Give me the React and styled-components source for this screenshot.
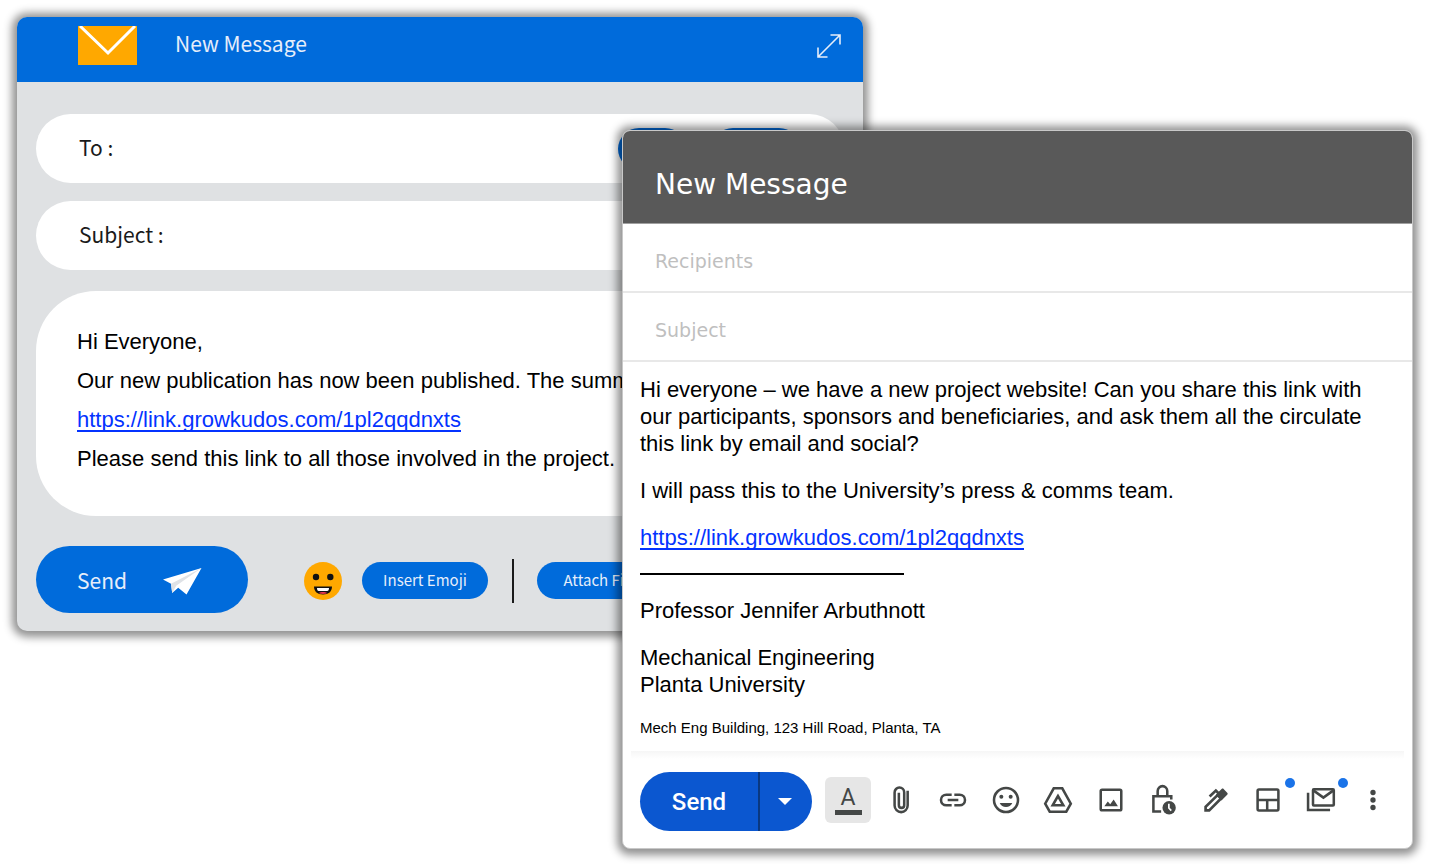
import React, { useState } from 'react';
import styled, { createGlobalStyle } from 'styled-components';

const LINK = 'https://link.growkudos.com/1pl2qqdnxts';

const tools = [
  {
    name: 'Attach files',
    draw: (
      <path d="M17 5v11.2a4.900 4.900 0 0 1-9.800 0V6.300a3.600 3.600 0 0 1 7.200 0v9.600a2 2 0 0 1-4 0V6.600" />
    ),
  },
  {
    name: 'Insert link',
    draw: (
      <path d="M11 8H7a4 4 0 0 0 0 8h4M13 8h4a4 4 0 0 1 0 8h-4M8 12h8" />
    ),
  },
  {
    name: 'Insert emoji',
    draw: (
      <>
        <circle cx="12" cy="12" r="9" />
        <circle cx="8.5" cy="9.6" r="1.5" fill="currentColor" stroke="none" />
        <circle cx="15.5" cy="9.6" r="1.5" fill="currentColor" stroke="none" />
        <path
          d="M7.3 14.2h9.4c-.8 1.9-2.6 3-4.7 3s-3.9-1.1-4.7-3z"
          fill="currentColor"
          stroke="none"
        />
      </>
    ),
  },
  {
    name: 'Insert from drive',
    draw: (
      <>
        <path d="M8.8 3.2h6.4l6.4 11.6-3.4 6H5.8l-3.4-6z" />
        <path d="M12 9l-4 7h8z" />
      </>
    ),
  },
  {
    name: 'Insert photo',
    draw: (
      <>
        <rect x="4.3" y="4.3" width="15.4" height="15.4" rx="1" />
        <path
          d="M7 16.6l2.6-3.5 1.8 2.1 2.6-3.6 3.2 5z"
          fill="currentColor"
          stroke="none"
        />
      </>
    ),
  },
  {
    name: 'Confidential mode',
    draw: (
      <>
        <path d="M10.6 20.6H4.8V9.2h13.4v2.4" />
        <path d="M8 9V5.2a3.6 3.6 0 0 1 7.2 0V9" />
        <circle cx="16.6" cy="17.8" r="5" fill="currentColor" stroke="none" />
        <path d="M16.4 14.8v3.2l1.8 1.9" stroke="#fff" strokeWidth="1.3" />
      </>
    ),
  },
  {
    name: 'Insert signature',
    draw: (
      <>
        <path d="M4.2 19.8v-2.700l9-8.800 2.600 2.600-8.900 8.900z" strokeWidth="2" />
        <path
          d="M12 7.900l4.200-4.100c.5-.5 1-.5 1.500 0l2.700 2.700c.5.5.5 1 0 1.500l-4.300 4.400z"
          fill="currentColor"
          stroke="none"
        />
        <path d="M7.200 9.400l4.700-4.500 2 2" strokeWidth="2" />
      </>
    ),
  },
  {
    name: 'Choose a layout',
    badge: true,
    draw: (
      <>
        <rect x="4.2" y="4.2" width="15.6" height="15.6" rx="1" />
        <path d="M4 12h16M11.4 12v8" />
      </>
    ),
  },
  {
    name: 'Multi-send',
    badge: true,
    draw: (
      <>
        <path d="M2.3 6.5v13h16.5" />
        <rect x="6" y="4" width="15.6" height="12.2" rx=".6" />
        <path d="M6 4.6l7.800 5.600 7.800-5.600" />
      </>
    ),
  },
  {
    name: 'More options',
    draw: (
      <g fill="currentColor" stroke="none">
        <circle cx="12" cy="6.4" r="2" />
        <circle cx="12" cy="12" r="2" />
        <circle cx="12" cy="17.6" r="2" />
      </g>
    ),
  },
];

function ToolIcon({ children }) {
  return (
    <svg
      width="32"
      height="32"
      viewBox="0 0 24 24"
      fill="none"
      stroke="currentColor"
      strokeWidth="1.9"
      aria-hidden="true"
    >
      {children}
    </svg>
  );
}

function Envelope() {
  return (
    <svg width="59" height="39" viewBox="0 0 59 39" aria-hidden="true">
      <rect width="59" height="39" fill="#ffa800" />
      <path d="M2 0l28 27L57 0" fill="none" stroke="#fff" strokeWidth="3" />
    </svg>
  );
}

function ExpandArrows() {
  return (
    <svg
      width="26"
      height="26"
      viewBox="0 0 26 26"
      fill="none"
      stroke="#e6eefa"
      strokeWidth="1.6"
      aria-hidden="true"
    >
      <path d="M2 24L24 2M14.5 2H24v9.5M2 14.5V24h9.5" />
    </svg>
  );
}

function PaperPlane() {
  return (
    <svg width="39" height="27" viewBox="0 0 39 27" aria-hidden="true">
      <path d="M38.5 0L0 11.5l8 4.2L9.2 25l6-5.300 8.300 6.800z" fill="#fff" />
      <path d="M38.5 0L8 15.7 9.2 25l4-7.200z" fill="#dfe2e6" />
    </svg>
  );
}

function Smiley() {
  return (
    <svg width="38" height="38" viewBox="0 0 38 38" aria-hidden="true">
      <circle cx="19" cy="19" r="19" fill="#ffa800" />
      <circle cx="12" cy="15" r="3.200" fill="#111" />
      <circle cx="26.300" cy="15" r="3.200" fill="#111" />
      <path d="M10 24.500h18c0 5-3.500 8-9 8s-9-3-9-8z" fill="#111" />
      <path d="M13 26h12c0 2-.6 3-1.800 3h-8.400c-1.200 0-1.800-1-1.800-3z" fill="#fff" />
      <path d="M15 31c1-1.300 7-1.300 8 0-1.500 1.200-6.500 1.200-8 0z" fill="#e8384f" />
    </svg>
  );
}

function BlueComposer() {
  return (
    <BlueWindow aria-label="Blue composer">
      <BlueHeader>
        <Envelope />
        <BlueTitle>New Message</BlueTitle>
        <PlainButton type="button" aria-label="Expand">
          <ExpandArrows />
        </PlainButton>
      </BlueHeader>
      <BlueForm>
        <PillField>
          <label htmlFor="blue-to">To :</label>
          <PillInput id="blue-to" type="text" />
          <CopyButton type="button" aria-label="Cc" $width={68} />
          <CopyButton type="button" aria-label="Bcc" $width={88} />
        </PillField>
        <PillField>
          <label htmlFor="blue-subject">Subject :</label>
          <PillInput id="blue-subject" type="text" />
        </PillField>
        <BlueMessage>
          <p>Hi Everyone,</p>
          <p>Our new publication has now been published. The summary</p>
          <p>
            <MailLink href={LINK}>{LINK}</MailLink>
          </p>
          <p>Please send this link to all those involved in the project.</p>
        </BlueMessage>
        <BlueFooter>
          <BlueSend type="button">
            Send
            <PaperPlane />
          </BlueSend>
          <BlueTools>
            <Smiley />
            <SmallPill type="button">Insert Emoji</SmallPill>
            <Separator />
            <SmallPill type="button">Attach File</SmallPill>
          </BlueTools>
        </BlueFooter>
      </BlueForm>
    </BlueWindow>
  );
}

function GreyComposer() {
  const [recipients, setRecipients] = useState('');
  const [subject, setSubject] = useState('');

  return (
    <GreyWindow aria-label="Grey composer">
      <GreyHeader>
        <GreyTitle>New Message</GreyTitle>
      </GreyHeader>
      <LineInput
        type="text"
        aria-label="Recipients"
        placeholder="Recipients"
        value={recipients}
        onChange={e => setRecipients(e.target.value)}
      />
      <LineInput
        type="text"
        aria-label="Subject"
        placeholder="Subject"
        value={subject}
        onChange={e => setSubject(e.target.value)}
      />
      <GreyMessage>
        <p>
          Hi everyone – we have a new project website! Can you share this link
          with our participants, sponsors and beneficiaries, and ask them all
          the circulate this link by email and social?
        </p>
        <p>I will pass this to the University’s press &amp; comms team.</p>
        <p>
          <MailLink href={LINK}>{LINK}</MailLink>
        </p>
        <SignatureRule />
        <p>Professor Jennifer Arbuthnott</p>
        <p>
          Mechanical Engineering
          <br />
          Planta University
        </p>
        <Address>Mech Eng Building, 123 Hill Road, Planta, TA</Address>
      </GreyMessage>
      <GreyFooter>
        <SendGroup>
          <SendButton type="button">Send</SendButton>
          <SendMore type="button" aria-label="More send options">
            <svg width="14" height="7" viewBox="0 0 14 7" aria-hidden="true">
              <path d="M0 0h14L7 7z" fill="#fff" />
            </svg>
          </SendMore>
        </SendGroup>
        <ToolRow>
          <ToolButton type="button" aria-label="Formatting options" $active>
            <FormatLetter>A</FormatLetter>
          </ToolButton>
          {tools.map(tool => (
            <ToolButton key={tool.name} type="button" aria-label={tool.name}>
              <ToolIcon>{tool.draw}</ToolIcon>
              {tool.badge ? <Badge /> : null}
            </ToolButton>
          ))}
        </ToolRow>
      </GreyFooter>
    </GreyWindow>
  );
}

function App() {
  return (
    <>
      <GlobalStyle />
      <Desktop>
        <BlueComposer />
        <GreyComposer />
      </Desktop>
    </>
  );
}

export default App;

const GlobalStyle = createGlobalStyle`
  * {
    box-sizing: border-box;
  }
  body {
    margin: 0;
    background: #fff;
    font-family: 'Liberation Sans', Arial, sans-serif;
    color: #000;
  }
  h2, p {
    margin: 0;
  }
  button, input {
    font: inherit;
    color: inherit;
    border: 0;
    padding: 0;
    background: none;
  }
  button {
    cursor: pointer;
  }
  svg {
    display: block;
    flex-shrink: 0;
  }
`;

const Desktop = styled.main`
  position: relative;
  min-height: 100vh;
  min-width: 1280px;
  overflow: hidden;
`;

const Window = styled.section`
  position: absolute;
  overflow: hidden;
  box-shadow: 0 1px 8px 5px rgba(0, 0, 0, 0.43);
`;

const BlueWindow = styled(Window)`
  top: 17px;
  left: 17px;
  right: 568px;
  border-radius: 10px;
  background: #dfe1e3;
  font-family: 'Noto Sans CJK SC', 'Noto Sans', sans-serif;
`;

const BlueHeader = styled.header`
  display: flex;
  align-items: center;
  height: 65px;
  padding: 0 21px 8px 61px;
  background: #006bdb;
`;

const BlueTitle = styled.h2`
  flex: 1;
  margin-left: 38px;
  padding-bottom: 6px;
  font-size: 21px;
  line-height: 32px;
  font-weight: 400;
  color: #e6eefa;
`;

const PlainButton = styled.button`
  display: flex;
`;

const BlueForm = styled.div`
  display: flex;
  flex-direction: column;
  padding: 32px 19px 18px;
`;

const PillField = styled.div`
  display: flex;
  align-items: center;
  gap: 26px;
  height: 69px;
  margin-bottom: 18px;
  padding: 0 44px 0 43px;
  border-radius: 35px;
  background: #fff;
  font-size: 21px;
  color: #1a1a1a;

  & > label {
    padding-bottom: 3px;
  }
`;

const PillInput = styled.input`
  flex: 1;
  min-width: 0;
  outline: none;
`;

const CopyButton = styled.button`
  width: ${props => props.$width}px;
  height: 42px;
  border-radius: 21px;
  background: #006bdb;
`;

const BlueMessage = styled.div`
  margin: 3px 0 30px;
  padding: 31px 41px 38px;
  border-radius: 60px;
  background: #fff;
  font-family: 'Liberation Sans', Arial, sans-serif;
  font-size: 22px;
  line-height: 39px;
  white-space: nowrap;
`;

const MailLink = styled.a`
  color: #0433ff;
  text-decoration: underline;
  text-decoration-thickness: 2px;
  text-decoration-skip-ink: none;
  text-underline-offset: 3px;
`;

const BlueFooter = styled.div`
  display: flex;
  align-items: center;
  gap: 56px;
`;

const BlueSend = styled.button`
  display: flex;
  align-items: center;
  justify-content: space-between;
  width: 212px;
  height: 67px;
  padding: 0 46px 0 41px;
  border-radius: 34px;
  background: #006bdb;
  color: #e6eefa;
  font-size: 21px;
  line-height: 32px;

  & > svg {
    margin-top: 4px;
  }
`;

const BlueTools = styled.div`
  display: flex;
  align-items: center;
  padding-top: 2px;
`;

const SmallPill = styled.button`
  width: 126px;
  height: 37px;
  margin-left: 20px;
  padding-bottom: 2px;
  border-radius: 19px;
  background: #006bdb;
  color: #e6eefa;
  font-size: 15px;
`;

const Separator = styled.div`
  width: 2px;
  height: 44px;
  margin: 0 3px 0 24px;
  background: #1a1a1a;
`;

const GreyWindow = styled(Window)`
  top: 130px;
  left: 622px;
  right: 18px;
  border: 1px solid #c8c8c8;
  border-radius: 8px;
  background: #fff;
`;

const GreyHeader = styled.header`
  padding: 36px 32px 20px;
  border-bottom: 1px solid #a0a0a0;
  background: #595959;
`;

const GreyTitle = styled.h2`
  font-family: 'DejaVu Sans', Verdana, sans-serif;
  font-size: 28px;
  line-height: 36px;
  font-weight: 400;
  color: #fff;
`;

const LineInput = styled.input`
  display: block;
  width: 100%;
  height: 69px;
  padding: 6px 32px 0;
  border-bottom: 2px solid #e8e8e8;
  outline: none;
  font-family: 'DejaVu Sans', Verdana, sans-serif;
  font-size: 19px;

  &::placeholder {
    color: #bfbfbf;
    opacity: 1;
  }
`;

const GreyMessage = styled.div`
  padding: 14px 40px 13px 17px;
  font-size: 22px;
  line-height: 27px;

  & > p + p {
    margin-top: 20px;
  }
`;

const SignatureRule = styled.hr`
  width: 264px;
  height: 2px;
  margin: 22px 0;
  border: 0;
  background: #000;
`;

const Address = styled.p`
  font-size: 15px;
  line-height: 20px;
`;

const GreyFooter = styled.footer`
  display: flex;
  align-items: center;
  gap: 13px;
  margin: 0 8px;
  padding: 21px 8px 17px 9px;
  background: linear-gradient(#f6f6f6, #fff 8px);
`;

const SendGroup = styled.div`
  display: flex;
  height: 59px;
  border-radius: 30px;
  overflow: hidden;
  background: #0b57d0;
  color: #fff;
`;

const SendButton = styled.button`
  width: 118px;
  font-family: Roboto, sans-serif;
  font-size: 24px;
  font-weight: 500;
`;

const SendMore = styled.button`
  display: flex;
  align-items: center;
  justify-content: center;
  width: 54px;
  padding-right: 3px;
  border-left: 2px solid #0a3880;
`;

const ToolRow = styled.div`
  display: flex;
  flex: 1;
  justify-content: space-between;
  padding-bottom: 3px;
`;

const ToolButton = styled.button`
  position: relative;
  display: flex;
  align-items: center;
  justify-content: center;
  width: 46px;
  height: 46px;
  border-radius: 6px;
  background: ${props => (props.$active ? '#e6e6e6' : 'none')};
  color: #444746;
`;

const FormatLetter = styled.span`
  width: 27px;
  border-bottom: 5px solid #444746;
  font-family: Roboto, sans-serif;
  font-size: 23px;
  line-height: 24px;
`;

const Badge = styled.span`
  position: absolute;
  top: 1px;
  right: -4px;
  width: 10px;
  height: 10px;
  border-radius: 50%;
  background: #1a73e8;
`;
